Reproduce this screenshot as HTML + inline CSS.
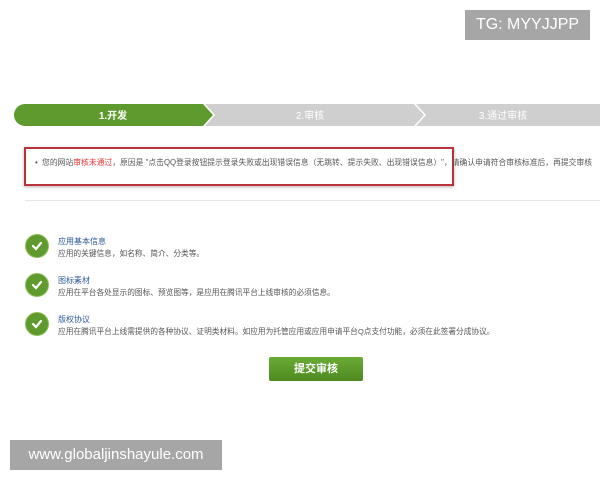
<!DOCTYPE html>
<html><head><meta charset="utf-8"><style>
*{margin:0;padding:0;box-sizing:border-box}
body{width:600px;height:480px;background:#fff;position:relative;overflow:hidden;font-family:"Liberation Sans","Noto Sans CJK SC",sans-serif}
.abs{position:absolute}
.t{font-size:7.7px;color:#555;white-space:nowrap;letter-spacing:0}
.ttl{font-size:8px;color:#2a5a9a;white-space:nowrap}
.chk{width:24px;height:24px;border-radius:50%;background:#5f9a2e;border:1px solid #8fbf5a}
</style></head><body>
<div class="abs" style="left:465px;top:10px;width:125px;height:30px;background:#a6a6a6;color:#fff;font-size:16px;line-height:30px;text-align:center">TG: MYYJJPP</div>

<svg class="abs" style="left:0;top:100px" width="600" height="30">
<path d="M600 4 L416 4 L426 15 L416 26 L600 26Z" fill="#cfcfcf"/>
<path d="M414 4 L205 4 L215 15 L205 26 L414 26 L424 15Z" fill="#cfcfcf"/>
<path d="M25 4 L203 4 L213 15 L203 26 L25 26 A11 11 0 0 1 25 4Z" fill="#5f9a2e"/>
<text x="113" y="19" fill="#fff" font-size="10" font-weight="bold" text-anchor="middle" font-family="Liberation Sans,Noto Sans CJK SC,sans-serif">1.开发</text>
<text x="310" y="19" fill="#fff" font-size="10" text-anchor="middle" font-family="Liberation Sans,Noto Sans CJK SC,sans-serif">2.审核</text>
<text x="503" y="19" fill="#fff" font-size="10" text-anchor="middle" font-family="Liberation Sans,Noto Sans CJK SC,sans-serif">3.通过审核</text>
</svg>

<div class="abs" style="left:24px;top:147px;width:430px;height:39px;border:2px solid #b8343a;box-shadow:0 1px 3px rgba(0,0,0,.3)"></div>
<div class="abs t" style="left:35px;top:157px;font-size:7.8px">•&nbsp; 您的网站<span style="color:#e33">审核未通过</span>，原因是 "点击QQ登录按钮提示登录失败或出现错误信息（无跳转、提示失败、出现错误信息）"，请确认申请符合审核标准后，再提交审核</div>
<div class="abs" style="left:25px;top:200px;width:575px;height:1px;background:#e6e6e6"></div>

<div class="abs chk" style="left:25px;top:234px"></div>
<div class="abs chk" style="left:25px;top:273px"></div>
<div class="abs chk" style="left:25px;top:312px"></div>
<svg class="abs" style="left:0;top:0" width="60" height="340">
<g stroke="#fff" stroke-width="2.2" fill="none" stroke-linecap="round"><path d="M33 246 L36 249 L41 243"/><path d="M33 285 L36 288 L41 282"/><path d="M33 324 L36 327 L41 321"/></g></svg>

<div class="abs ttl" style="left:58px;top:236px">应用基本信息</div>
<div class="abs t" style="left:58px;top:248px">应用的关键信息，如名称、简介、分类等。</div>
<div class="abs ttl" style="left:58px;top:275px">图标素材</div>
<div class="abs t" style="left:58px;top:287px">应用在平台各处显示的图标、预览图等，是应用在腾讯平台上线审核的必须信息。</div>
<div class="abs ttl" style="left:58px;top:314px">版权协议</div>
<div class="abs t" style="left:58px;top:326px">应用在腾讯平台上线需提供的各种协议、证明类材料。如应用为托管应用或应用申请平台Q点支付功能，必须在此签署分成协议。</div>

<div class="abs" style="left:269px;top:357px;width:94px;height:24px;background:linear-gradient(#6aab35,#4f8a22);border-radius:2px;color:#fff;font-size:11px;font-weight:bold;text-align:center;line-height:24px">提交审核</div>

<div class="abs" style="left:10px;top:440px;width:212px;height:30px;background:#a6a6a6;color:#fff;font-size:15px;line-height:30px;text-align:center">www.globaljinshayule.com</div>
</body></html>
